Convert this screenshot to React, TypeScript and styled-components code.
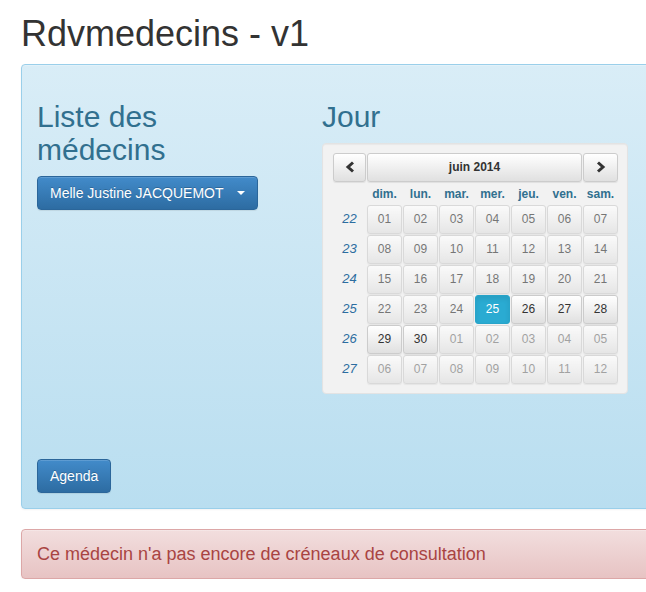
import React from "react";
import styled, { createGlobalStyle } from "styled-components";

const GlobalStyle = createGlobalStyle`
  html, body {
    margin: 0;
    padding: 0;
    overflow: hidden;
    background: #fff;
  }
  body {
    font-family: "Liberation Sans", Arial, sans-serif;
    font-size: 14px;
    line-height: 1.42857;
    color: #333;
  }
`;

type Day = { label: string; state: "disabled" | "muted" | "enabled" | "active" };

const weeks: { num: number; days: Day[] }[] = (() => {
  const rows: { num: number; days: Day[] }[] = [];
  const pad = (n: number) => (n < 10 ? "0" + n : String(n));
  let day = 1;
  let nextMonth = false;
  for (let w = 0; w < 6; w++) {
    const days: Day[] = [];
    for (let d = 0; d < 7; d++) {
      let state: Day["state"];
      if (nextMonth) state = "muted";
      else if (day < 25) state = "disabled";
      else if (day === 25) state = "active";
      else state = "enabled";
      days.push({ label: pad(day), state });
      day++;
      if (!nextMonth && day > 30) {
        day = 1;
        nextMonth = true;
      }
    }
    rows.push({ num: 22 + w, days });
  }
  return rows;
})();

const dayNames = ["dim.", "lun.", "mar.", "mer.", "jeu.", "ven.", "sam."];

export default function App() {
  return (
    <Page>
      <GlobalStyle />
      <Title>Rdvmedecins - v1</Title>
      <InfoPanel>
        <Columns>
          <Column>
            <Heading>Liste des médecins</Heading>
            <PrimaryButton>
              Melle Justine JACQUEMOT
              <Caret />
            </PrimaryButton>
          </Column>
          <Column>
            <Heading>Jour</Heading>
            <Calendar>
              <CalGrid>
                <NavButton>
                  <Chevron dir="left" />
                </NavButton>
                <MonthButton>juin 2014</MonthButton>
                <NavButton>
                  <Chevron dir="right" />
                </NavButton>
                <span />
                {dayNames.map((n) => (
                  <DayName key={n}>{n}</DayName>
                ))}
                {weeks.map((w) => (
                  <React.Fragment key={w.num}>
                    <WeekNum>{w.num}</WeekNum>
                    {w.days.map((d, i) => (
                      <DayButton key={w.num + "-" + i} $state={d.state}>
                        {d.label}
                      </DayButton>
                    ))}
                  </React.Fragment>
                ))}
              </CalGrid>
            </Calendar>
          </Column>
        </Columns>
        <AgendaButton>Agenda</AgendaButton>
      </InfoPanel>
      <DangerAlert>Ce médecin n'a pas encore de créneaux de consultation</DangerAlert>
    </Page>
  );
}

function Chevron({ dir }: { dir: "left" | "right" }) {
  const points = dir === "left" ? "8,1.5 3,6 8,10.5" : "2,1.5 7,6 2,10.5";
  return (
    <svg width="10" height="12" viewBox="0 0 10 12">
      <polyline points={points} fill="none" stroke="#333" strokeWidth="3" strokeLinejoin="miter" />
    </svg>
  );
}

const Page = styled.div`
  width: 1100px;
  padding: 14px 0 0 21px;
`;

const Title = styled.h1`
  margin: 0 0 10px;
  font-size: 36px;
  font-weight: 500;
  line-height: 1.1;
  color: #333;
`;

const InfoPanel = styled.div`
  border: 1px solid #9acfea;
  border-radius: 4px;
  background: linear-gradient(to bottom, #d9edf7 0%, #b9def0 100%);
  color: #31708f;
  padding: 15px;
  box-shadow: inset 0 1px 0 rgba(255, 255, 255, 0.25), 0 1px 2px rgba(0, 0, 0, 0.05);
`;

const Columns = styled.div`
  display: grid;
  grid-template-columns: 285px 1fr;
`;

const Column = styled.div`
  display: flex;
  flex-direction: column;
  align-items: flex-start;
`;

const Heading = styled.h2`
  margin: 20px 0 10px;
  font-size: 30px;
  font-weight: 500;
  line-height: 1.1;
  color: #31708f;
  max-width: 200px;
`;

const BlueButton = styled.button`
  font-family: inherit;
  font-size: 14px;
  line-height: 20px;
  padding: 6px 12px;
  color: #fff;
  border: 1px solid #2b669a;
  border-radius: 4px;
  background: linear-gradient(to bottom, #428bca 0%, #2d6ca2 100%);
  text-shadow: 0 -1px 0 rgba(0, 0, 0, 0.2);
  box-shadow: inset 0 1px 0 rgba(255, 255, 255, 0.15), 0 1px 1px rgba(0, 0, 0, 0.075);
  display: inline-flex;
  align-items: center;
`;

const PrimaryButton = styled(BlueButton)``;

const AgendaButton = styled(BlueButton)`
  margin-top: 65px;
`;

const Caret = styled.span`
  display: inline-block;
  width: 0;
  height: 0;
  margin-left: 14px;
  border-top: 4px solid #fff;
  border-left: 4px solid transparent;
  border-right: 4px solid transparent;
`;

const Calendar = styled.div`
  background: #f2f2f2;
  border: 1px solid #e3e3e3;
  border-radius: 4px;
  padding: 9px 9px 9px 10px;
  box-shadow: inset 0 1px 1px rgba(0, 0, 0, 0.04);
`;

const CalGrid = styled.div`
  display: grid;
  grid-template-columns: 33px repeat(7, 35px);
  column-gap: 1px;
  row-gap: 1px;
`;

const GreyButton = styled.button`
  font-family: inherit;
  height: 29px;
  padding: 0;
  border: 1px solid #ccc;
  border-radius: 3px;
  background: linear-gradient(to bottom, #fff 0%, #e0e0e0 100%);
  box-shadow: inset 0 1px 0 rgba(255, 255, 255, 0.15), 0 1px 1px rgba(0, 0, 0, 0.075);
  color: #333;
  font-size: 12px;
  display: flex;
  align-items: center;
  justify-content: center;
`;

const NavButton = styled(GreyButton)``;

const MonthButton = styled(GreyButton)`
  grid-column: span 6;
  font-weight: bold;
`;

const DayName = styled.div`
  height: 20px;
  margin-top: 1px;
  font-size: 12px;
  font-weight: bold;
  line-height: 20px;
  text-align: center;
  color: #31708f;
`;

const WeekNum = styled.em`
  display: flex;
  align-items: center;
  justify-content: center;
  height: 29px;
  font-size: 13px;
  color: #2c6da0;
`;

const DayButton = styled(GreyButton)<{ $state: Day["state"] }>`
  color: ${(p) => (p.$state === "muted" ? "#777" : p.$state === "active" ? "#fff" : "#333")};
  opacity: ${(p) => (p.$state === "disabled" || p.$state === "muted" ? 0.65 : 1)};
  ${(p) =>
    p.$state === "active" &&
    `
    background: #2aabd2;
    border-color: #28a4c9;
    box-shadow: inset 0 3px 5px rgba(0, 0, 0, 0.08);
  `}
`;

const DangerAlert = styled.div`
  margin-top: 20px;
  padding: 14px 15px;
  border: 1px solid #dca7a7;
  border-radius: 4px;
  background: linear-gradient(to bottom, #f2dede 0%, #e7c3c3 100%);
  color: #a94442;
  font-size: 18px;
  line-height: 20px;
  box-shadow: inset 0 1px 0 rgba(255, 255, 255, 0.25), 0 1px 2px rgba(0, 0, 0, 0.05);
`;
